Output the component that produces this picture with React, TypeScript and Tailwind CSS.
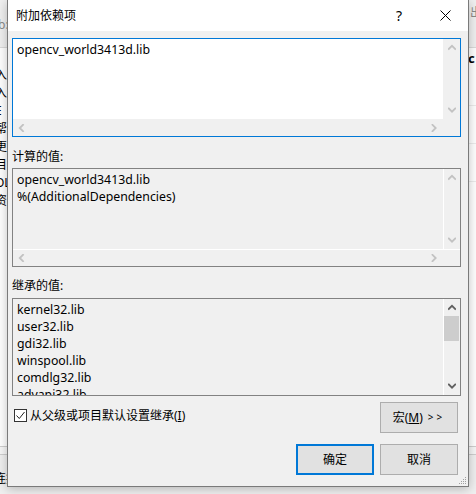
import React from "react";

const FONT = "font-['Noto_Sans','Noto_Sans_CJK_SC',sans-serif]";

function Chevron({ dir, enabled }: { dir: "up" | "down" | "left" | "right"; enabled?: boolean }) {
  const color = enabled ? "#606060" : "#c2c2c2";
  const d =
    dir === "up"
      ? "M0.8 5 L4 1.8 L7.2 5"
      : dir === "down"
      ? "M0.8 1.5 L4 4.7 L7.2 1.5"
      : dir === "left"
      ? "M5 0.8 L1.8 4 L5 7.2"
      : "M1.5 0.8 L4.7 4 L1.5 7.2";
  const w = dir === "up" || dir === "down" ? 8 : 7;
  const h = dir === "up" || dir === "down" ? 7 : 8;
  return (
    <svg width={w} height={h} viewBox={`0 0 ${w} ${h}`} fill="none">
      <path d={d} stroke={color} strokeWidth="1.8" strokeLinecap="square" />
    </svg>
  );
}

function VScroll({ enabled, thumb, sep }: { enabled?: boolean; thumb?: boolean; sep?: boolean }) {
  return (
    <div className={`w-[17px] flex flex-col bg-[#f0f0f0] ${sep ? "border-l border-white" : ""}`}>
      <div className="h-[17px] flex items-center justify-center">
        <Chevron dir="up" enabled={enabled} />
      </div>
      {thumb && <div className="h-[25px] w-[15px] bg-[#cdcdcd]" />}
      <div className="flex-1" />
      <div className="h-[17px] flex items-center justify-center">
        <Chevron dir="down" enabled={enabled} />
      </div>
    </div>
  );
}

function HScroll({ sep }: { sep?: boolean }) {
  return (
    <div className={`h-[17px] flex bg-[#f0f0f0] ${sep ? "border-t border-white" : ""}`}>
      <div className="w-[17px] flex items-center justify-center">
        <Chevron dir="left" />
      </div>
      <div className="flex-1" />
      <div className="w-[17px] flex items-center justify-center">
        <Chevron dir="right" />
      </div>
      <div className="w-[17px]" />
    </div>
  );
}

function EditBox({
  lines,
  focused,
  hscroll,
  enabled,
  height,
}: {
  lines: string[];
  focused?: boolean;
  hscroll?: boolean;
  enabled?: boolean;
  height: string;
}) {
  return (
    <div
      className={`${height} flex flex-col border ${
        focused ? "border-[#0078d7] bg-white" : "border-[#828282] bg-[#f0f0f0]"
      }`}
    >
      <div className="flex flex-1 min-h-0">
        <div className="flex-1 min-w-0 overflow-hidden pl-[4px] pt-[2px] leading-[17px] text-[12.3px] text-black">
          {lines.map((l, i) => (
            <div key={i} className="whitespace-nowrap">
              {l}
            </div>
          ))}
        </div>
        <VScroll enabled={enabled} thumb={enabled} sep={!focused} />
      </div>
      {hscroll && <HScroll sep={!focused} />}
    </div>
  );
}

function Button({ children, isDefault }: { children: React.ReactNode; isDefault?: boolean }) {
  return (
    <div
      className={`w-[78px] h-[31px] flex items-center justify-center bg-[#e1e1e1] text-[12px] text-black ${
        isDefault ? "border-2 border-[#0078d7]" : "border border-[#adadad]"
      }`}
    >
      {children}
    </div>
  );
}

function Background() {
  const leftRows = ["入属", "入属", "E", "帮助", "更改", "目", "OL", "资源"];
  return (
    <div className="w-full h-full flex flex-col bg-white">
      <div className="h-[48px] bg-[#f0f0f0] border-b border-[#dadada] flex justify-between items-center text-[12px] text-[#8a8a8a]">
        <span className="-ml-[2px] mt-[2px]">b:</span>
        <span className="mr-[-6px] -mt-[22px]">出</span>
      </div>
      <div className="flex-1 flex justify-between">
        <div className="flex flex-col pt-[18px] text-[12px] leading-[18px] text-black -ml-[5px]">
          {leftRows.map((r, i) => (
            <span key={i} className="whitespace-nowrap">
              {r}
            </span>
          ))}
        </div>
        <div className="flex flex-col w-[8px] pt-[2px]">
          <span className="text-[13px] font-bold leading-[16px] text-black">c</span>
          <div className="h-[40px] border-b border-[#ececec]" />
          <div className="h-[38px] border-b border-[#ececec]" />
          <div className="h-[38px] border-b border-[#ececec]" />
        </div>
      </div>
      <div className="h-[8px] border-t border-[#cfcfcf] bg-[#f7f7f7]" />
      <div className="h-[40px] bg-[#f0f0f0] border-t border-[#cfcfcf] flex items-center">
        <span className="text-[12px] -ml-[6px] mt-[8px]">连接</span>
      </div>
    </div>
  );
}

export default function App() {
  return (
    <div className={`relative w-[476px] h-[494px] overflow-hidden bg-[#f0f0f0] ${FONT} text-black`}>
      <Background />
      <div className="absolute left-[7px] top-0 w-[462px] h-[487px] flex flex-col border-x border-b border-[#7a7a7a] bg-[#f0f0f0] shadow-[0_2px_10px_rgba(0,0,0,0.25)]">
        {/* title bar */}
        <div className="h-[31px] bg-white flex items-center pl-[8px] shrink-0">
          <span className="text-[12px] leading-[17px]">附加依赖项</span>
          <div className="ml-auto flex h-full">
            <div className="w-[46px] h-full flex items-center justify-center text-[14px] leading-none">?</div>
            <div className="w-[46px] h-full flex items-center justify-center">
              <svg width="11" height="11" viewBox="0 0 11 11">
                <path d="M0.5 0.5 L10.5 10.5 M10.5 0.5 L0.5 10.5" stroke="#000" strokeWidth="1" />
              </svg>
            </div>
          </div>
        </div>

        {/* body */}
        <div className="flex-1 flex flex-col pl-[4px] pr-[7px] pt-[7px]">
          <EditBox height="h-[99px]" focused hscroll lines={["opencv_world3413d.lib"]} />
          <div className="mt-[11px] h-[17px] leading-[17px] text-[12px]">计算的值:</div>
          <div className="mt-[3px]">
            <EditBox
              height="h-[99px]"
              hscroll
              lines={["opencv_world3413d.lib", "%(AdditionalDependencies)"]}
            />
          </div>
          <div className="mt-[10px] h-[17px] leading-[17px] text-[12px]">继承的值:</div>
          <div className="mt-[4px]">
            <EditBox
              height="h-[98px]"
              enabled
              lines={["kernel32.lib", "user32.lib", "gdi32.lib", "winspool.lib", "comdlg32.lib", "advapi32.lib"]}
            />
          </div>

          <div className="mt-[6px] flex items-start">
            <div className="mt-[5px] ml-[2px] flex items-center gap-[3px]">
              <div className="w-[13px] h-[13px] border border-[#333333] bg-white flex items-center justify-center">
                <svg width="11" height="11" viewBox="0 0 11 11" fill="none">
                  <path d="M1.5 5.5 L4.3 8.5 L9.5 2" stroke="#222" strokeWidth="1" />
                </svg>
              </div>
              <span className="text-[12px] leading-[17px]">
                从父级或项目默认设置继承(<u>I</u>)
              </span>
            </div>
            <div className="ml-auto mr-[3px]">
              <Button>
                <span>
                  宏(<u>M</u>)
                </span>
                <span className="ml-[5px] text-[10px] tracking-[3px]">&gt;&gt;</span>
              </Button>
            </div>
          </div>

          <div className="mt-[11px] flex justify-end gap-[6px] mr-[3px]">
            <Button isDefault>确定</Button>
            <Button>取消</Button>
          </div>
        </div>

        {/* resize grip */}
        <div className="absolute right-[1px] bottom-[1px]">
          <svg width="9" height="9" viewBox="0 0 9 9">
            <g fill="#a0a0a0">
              <rect x="7" y="1" width="1" height="1" />
              <rect x="5" y="3" width="1" height="1" />
              <rect x="7" y="3" width="1" height="1" />
              <rect x="3" y="5" width="1" height="1" />
              <rect x="5" y="5" width="1" height="1" />
              <rect x="7" y="5" width="1" height="1" />
              <rect x="1" y="7" width="1" height="1" />
              <rect x="3" y="7" width="1" height="1" />
              <rect x="5" y="7" width="1" height="1" />
              <rect x="7" y="7" width="1" height="1" />
            </g>
          </svg>
        </div>
      </div>
    </div>
  );
}
